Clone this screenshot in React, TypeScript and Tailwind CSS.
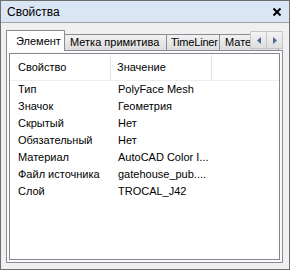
import React from "react";

const rows: [string, string][] = [
  ["Тип", "PolyFace Mesh"],
  ["Значок", "Геометрия"],
  ["Скрытый", "Нет"],
  ["Обязательный", "Нет"],
  ["Материал", "AutoCAD Color I..."],
  ["Файл источника", "gatehouse_pub...."],
  ["Слой", "TROCAL_J42"],
];

const tabs = ["Элемент", "Метка примитива", "TimeLiner", "Материал"];
const tabWidths = ["w-[59px]", "w-[103px]", "w-[54px]", "w-[60px]"];

export default function App() {
  return (
    <div
      className="w-[290px] h-[270px] flex flex-col bg-[#f0f0f0] border border-[#6e6e6e] text-[11px] text-black overflow-hidden"
      style={{ fontFamily: '"Liberation Sans", Arial, sans-serif' }}
    >
      {/* заголовок */}
      <div className="h-[22px] shrink-0 flex items-center justify-between pl-[6px] pr-[7px] bg-[#dae6f4] border-b border-[#9aa4b0]">
        <span className="text-[12px]">Свойства</span>
        <svg width="10" height="10" viewBox="0 0 10 10">
          <path d="M1.5 1.5 L8.5 8.5 M8.5 1.5 L1.5 8.5" stroke="#000" strokeWidth="2" />
        </svg>
      </div>

      <div className="flex-1 flex flex-col pl-[5px] pr-[6px] pt-[8px] pb-[6px]">
        {/* вкладки */}
        <div className="relative h-[20px] shrink-0 flex items-end -mb-[1px] z-10">
          {tabs.map((t, i) =>
            i === 0 ? (
              <div
                key={t}
                className={`${tabWidths[i]} h-[21px] shrink-0 flex items-center pl-[9px] bg-white border border-b-0 border-[#898c95]`}
              >
                {t}
              </div>
            ) : (
              <div
                key={t}
                className={`${tabWidths[i]} h-[17px] shrink-0 flex items-center ${i === 2 ? "pl-[4px] tracking-[-0.2px]" : "pl-[5px]"} -ml-[1px] overflow-hidden whitespace-nowrap bg-gradient-to-b from-[#f2f2f2] to-[#dcdcdc] border border-[#898c95]`}
              >
                {t}
              </div>
            )
          )}
          <div className="absolute right-0 top-0 w-[33px] h-[18px] flex bg-[#f0f0f0] border border-[#c6c6c6]">
            <div className="flex-1 flex items-center justify-center bg-gradient-to-b from-[#f4f4f4] to-[#dedede] border-r border-[#c6c6c6]">
              <svg width="4" height="7" viewBox="0 0 4 7">
                <path d="M4 0 L0 3.5 L4 7 Z" fill="#4e6a93" />
              </svg>
            </div>
            <div className="flex-1 flex items-center justify-center bg-gradient-to-b from-[#f4f4f4] to-[#dedede]">
              <svg width="4" height="7" viewBox="0 0 4 7">
                <path d="M0 0 L4 3.5 L0 7 Z" fill="#4e6a93" />
              </svg>
            </div>
          </div>
        </div>

        {/* панель */}
        <div className="flex-1 flex border border-[#898c95] bg-[#fbfbfb] p-[2px]">
          <div className="flex-1 flex flex-col bg-white border border-[#828790] pt-[1px]">
            <div className="h-[26px] flex border-b border-[#eeeeee]">
              <div className="w-[101px] flex items-center pl-[8px] border-r border-[#e3e3e3]">Свойство</div>
              <div className="w-[101px] flex items-center pl-[6px] border-r border-[#e3e3e3]">Значение</div>
              <div className="flex-1" />
            </div>
            {rows.map(([k, v]) => (
              <div key={k} className="h-[17px] flex items-center whitespace-nowrap">
                <div className="w-[102px] pl-[8px]">{k}</div>
                <div className="w-[102px] pl-[6px]">{v}</div>
              </div>
            ))}
          </div>
        </div>
      </div>
    </div>
  );
}
